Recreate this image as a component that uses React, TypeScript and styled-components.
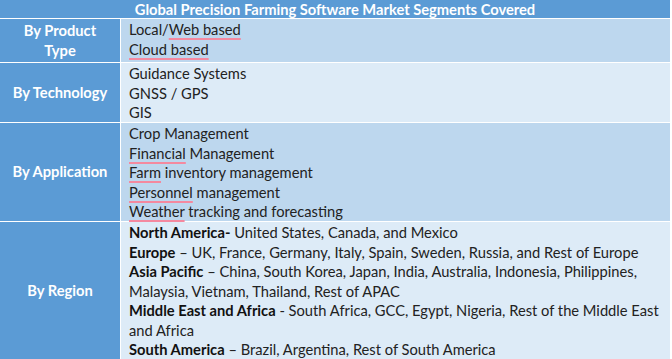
import styled, { createGlobalStyle } from "styled-components";

const GlobalStyle = createGlobalStyle`
  html, body {
    margin: 0;
    padding: 0;
    background: #ffffff;
  }
  body {
    font-family: Lato, "Open Sans", sans-serif;
  }
`;

const Table = styled.div`
  width: 670px;
  height: 359px;
  display: grid;
  grid-template-columns: 120px 1fr;
  grid-template-rows: 18px 43px 59px 98px 1fr;
  gap: 1px;
  background-color: #ffffff;
  overflow: hidden;
`;

const Title = styled.div`
  grid-column: 1 / span 2;
  background-color: #5b9bd5;
  color: #ffffff;
  font-weight: 700;
  font-size: 14.7px;
  line-height: 18px;
  text-align: center;
`;

const Label = styled.div`
  background-color: #5b9bd5;
  color: #ffffff;
  font-weight: 700;
  font-size: 14.7px;
  line-height: 19.5px;
  display: flex;
  align-items: center;
  justify-content: center;
  text-align: center;
  padding: 0 12px;
`;

const Cell = styled.div<{ $shade: "dark" | "light" }>`
  background-color: ${(p) => (p.$shade === "dark" ? "#bdd7ee" : "#ddebf7")};
  color: #222222;
  font-size: 14.7px;
  line-height: 19.5px;
  padding: 1px 8px 0 8px;
`;

const Line = styled.div`
  white-space: nowrap;
`;

const Typo = styled.span`
  text-decoration: underline;
  text-decoration-color: #f4899f;
  text-decoration-thickness: 2px;
  text-underline-offset: 3px;
`;

const Bold = styled.b`
  font-weight: 700;
  color: #111111;
`;

function App() {
  return (
    <>
      <GlobalStyle />
      <Table>
        <Title>Global Precision Farming Software Market Segments Covered</Title>

        <Label>By Product Type</Label>
        <Cell $shade="dark">
          <Line>
            Local/<Typo>Web based</Typo>
          </Line>
          <Line>
            <Typo>Cloud based</Typo>
          </Line>
        </Cell>

        <Label>By Technology</Label>
        <Cell $shade="light">
          <Line>Guidance Systems</Line>
          <Line>GNSS / GPS</Line>
          <Line>GIS</Line>
        </Cell>

        <Label>By Application</Label>
        <Cell $shade="dark">
          <Line>Crop Management</Line>
          <Line>
            <Typo>Financial</Typo> Management
          </Line>
          <Line>
            <Typo>Farm</Typo> inventory management
          </Line>
          <Line>
            <Typo>Personnel</Typo> management
          </Line>
          <Line>
            <Typo>Weather</Typo> tracking and forecasting
          </Line>
        </Cell>

        <Label>By Region</Label>
        <Cell $shade="light">
          <Line>
            <Bold>North America-</Bold> United States, Canada, and Mexico
          </Line>
          <Line>
            <Bold>Europe</Bold> – UK, France, Germany, Italy, Spain, Sweden, Russia, and Rest of Europe
          </Line>
          <Line>
            <Bold>Asia Pacific</Bold> – China, South Korea, Japan, India, Australia, Indonesia, Philippines,
          </Line>
          <Line>Malaysia, Vietnam, Thailand, Rest of APAC</Line>
          <Line>
            <Bold>Middle East and Africa</Bold> - South Africa, GCC, Egypt, Nigeria, Rest of the Middle East
          </Line>
          <Line>and Africa</Line>
          <Line>
            <Bold>South America</Bold> – Brazil, Argentina, Rest of South America
          </Line>
        </Cell>
      </Table>
    </>
  );
}

export default App;
